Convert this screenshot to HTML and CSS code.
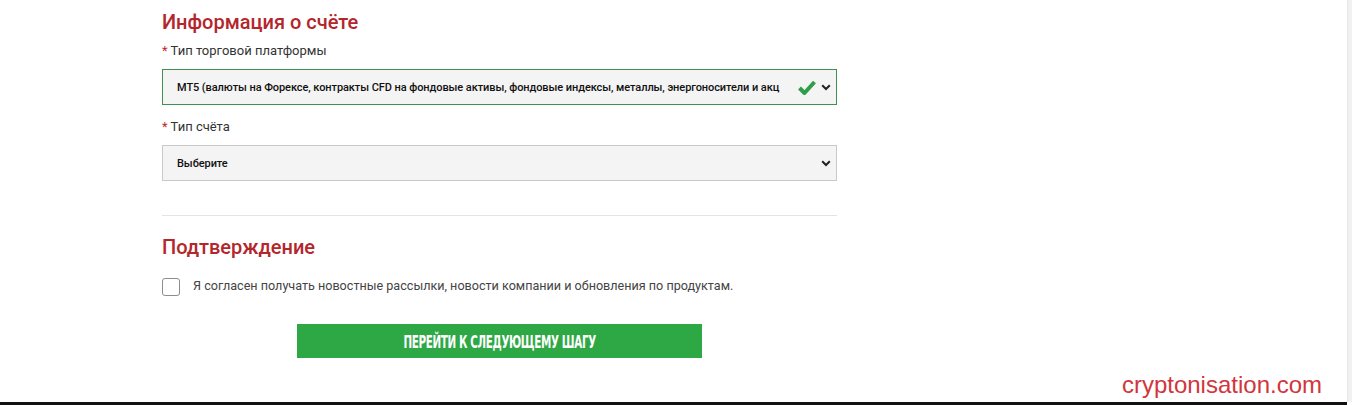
FILE: index.html
```html
<!DOCTYPE html>
<html lang="ru">
  <head>
    <meta charset="UTF-8" />
    <meta name="viewport" content="width=device-width, initial-scale=1.0" />
    <title>Открытие счёта</title>
    <link rel="stylesheet" href="styles.css">
  </head>
  <body>
    <div class="page">
      <div class="main">
        <form class="container">
          <h2 class="sectionTitle">Информация о счёте</h2>

          <label class="fieldLabel"><span class="req">*</span> Тип торговой платформы</label>
          <div class="select valid">
            <span class="selectText">MT5 (валюты на Форексе, контракты CFD на фондовые активы, фондовые индексы, металлы, энергоносители и акц</span>
            <svg class="check" width="18" height="15" viewBox="0 0 18 15">
              <path d="M1.5 8 L6.5 13 L16.5 2" fill="none" stroke="#2e9e48" stroke-width="4" stroke-linejoin="round" />
            </svg>
            <svg class="chevron" width="10" height="7" viewBox="0 0 10 7">
              <path d="M1.2 1.2 L5 5 L8.8 1.2" fill="none" stroke="#222" stroke-width="2" />
            </svg>
          </div>

          <label class="fieldLabel second"><span class="req">*</span> Тип счёта</label>
          <div class="select">
            <span class="selectText">Выберите</span>
            <svg class="chevron" width="10" height="7" viewBox="0 0 10 7">
              <path d="M1.2 1.2 L5 5 L8.8 1.2" fill="none" stroke="#222" stroke-width="2" />
            </svg>
          </div>

          <div class="divider"></div>

          <h2 class="sectionTitle confirm">Подтверждение</h2>

          <label class="agree">
            <span class="box"></span>
            <span class="agreeText">Я согласен получать новостные рассылки, новости компании и обновления по продуктам.</span>
          </label>

          <div class="actions">
            <button type="button" class="nextBtn"><span>Перейти к следующему шагу</span></button>
          </div>
        </form>

        <div class="watermark">cryptonisation.com</div>
      </div>
      <div class="edge"></div>
    </div>
    <div class="bottomBar"></div>
  </body>
</html>
```

FILE: styles.css
```css
* {
  box-sizing: border-box;
}
html,
body {
  margin: 0;
  padding: 0;
  background: #fff;
}
body {
  font-family: Roboto, Arial, Helvetica, sans-serif;
  color: #333;
  width: 1352px;
  height: 405px;
  overflow: hidden;
}

.page {
  display: flex;
  height: 402px;
}
.main {
  position: relative;
  flex: 1;
}
.edge {
  width: 5px;
  background: #f1f1f1;
  border-left: 1px solid #e6e6e6;
}
.bottomBar {
  height: 3px;
  width: 1347px;
  background: #111;
}

.container {
  width: 675px;
  margin-left: 162px;
  padding-top: 10px;
  display: flex;
  flex-direction: column;
}

.sectionTitle {
  margin: 0;
  font-size: 20px;
  line-height: 25px;
  font-weight: 500;
  color: #b3262c;
}

.fieldLabel {
  margin-top: 7px;
  font-size: 13px;
  line-height: 17px;
  color: #333;
}
.fieldLabel.second {
  margin-top: 13px;
}
.req {
  color: #c0272d;
}

.select {
  margin-top: 10px;
  height: 36px;
  display: flex;
  align-items: center;
  padding: 0 5px 0 14px;
  background: #f4f4f4;
  border: 1px solid #c9c9c9;
  font-size: 11px;
  font-weight: 500;
  letter-spacing: -0.08px;
  color: #111;
}
.select.valid {
  border-color: #3f9150;
}
.selectText {
  flex: 1;
  white-space: nowrap;
  overflow: hidden;
}
.check {
  margin: 0 5px 0 18px;
}

.divider {
  margin-top: 34px;
  height: 1px;
  background: #e4e4e4;
}

.confirm {
  margin-top: 19px;
}

.agree {
  margin-top: 18px;
  display: flex;
  align-items: flex-start;
  gap: 13px;
  font-size: 12.6px;
  line-height: 15px;
  color: #444;
}
.box {
  width: 18px;
  height: 18px;
  border: 1px solid #8d8d8d;
  border-radius: 3px;
  background: #fff;
}

.actions {
  margin-top: 28px;
  padding-left: 135px;
}
.nextBtn {
  width: 405px;
  height: 34px;
  border: 0;
  background: #2ea745;
  color: #fff;
  display: flex;
  align-items: center;
  justify-content: center;
  font-family: "DejaVu Sans Condensed", "DejaVu Sans", sans-serif;
  font-weight: bold;
  font-size: 16px;
  text-transform: uppercase;
  letter-spacing: -0.5px;
  padding: 0;
}
.nextBtn span {
  display: inline-block;
  transform: scale(0.72, 1.1);
  white-space: nowrap;
}

.watermark {
  position: absolute;
  right: 25px;
  bottom: 3px;
  font-family: "Liberation Sans", Arial, sans-serif;
  font-size: 24px;
  color: #d2353c;
}
```
